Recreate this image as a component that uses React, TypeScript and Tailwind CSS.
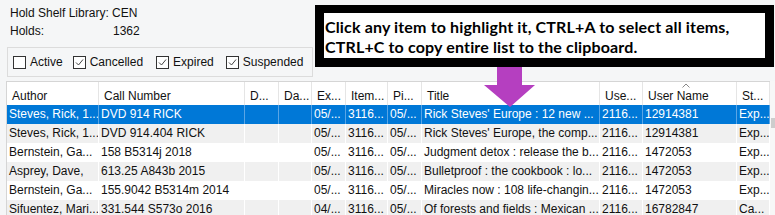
const columns = [
  { label: "Author", w: 92 },
  { label: "Call Number", w: 146 },
  { label: "D...", w: 34 },
  { label: "Da...", w: 33 },
  { label: "Ex...", w: 34 },
  { label: "Item...", w: 42 },
  { label: "Pi...", w: 34 },
  { label: "Title", w: 178 },
  { label: "Use...", w: 43 },
  { label: "User Name", w: 94 },
  { label: "St...", w: 33 },
];

const rows = [
  ["Steves, Rick, 1...", "DVD 914 RICK", "", "", "05/...", "3116...", "05/...", "Rick Steves' Europe : 12 new ...", "2116...", "12914381", "Exp..."],
  ["Steves, Rick, 1...", "DVD 914.404 RICK", "", "", "05/...", "3116...", "05/...", "Rick Steves' Europe, the comp...", "2116...", "12914381", "Exp..."],
  ["Bernstein, Ga...", "158 B5314j 2018", "", "", "05/...", "3116...", "05/...", "Judgment detox : release the b...", "2116...", "1472053", "Exp..."],
  ["Asprey, Dave,", "613.25 A843b 2015", "", "", "05/...", "3116...", "05/...", "Bulletproof : the cookbook : lo...", "2116...", "1472053", "Exp..."],
  ["Bernstein, Ga...", "155.9042 B5314m 2014", "", "", "05/...", "3116...", "05/...", "Miracles now : 108 life-changin...", "2116...", "1472053", "Exp..."],
  ["Sifuentez, Mari...", "331.544 S573o 2016", "", "", "04/...", "3116...", "05/...", "Of forests and fields : Mexican ...", "2116...", "16782847", "Ca..."],
];

const filters = [
  { label: "Active", checked: false, space: "mr-[10px]" },
  { label: "Cancelled", checked: true, space: "mr-[13px]" },
  { label: "Expired", checked: true, space: "mr-[12px]" },
  { label: "Suspended", checked: true, space: "" },
];

const CheckBox = ({ checked }: { checked: boolean }) => (
  <span className="w-[13px] h-[13px] border border-[#333] bg-white flex items-center justify-center">
    {checked && (
      <svg width="11" height="11" viewBox="0 0 11 11">
        <path d="M2 5.5 L4.5 8 L9 2.5" fill="none" stroke="#444" strokeWidth="1" />
      </svg>
    )}
  </span>
);

const App = () => {
  return (
    <div
      className="relative w-[775px] h-[215px] overflow-hidden bg-[#f5f6f7] text-[12px] text-[#111]"
      style={{ fontFamily: '"Liberation Sans", Arial, sans-serif' }}
    >
      <div className="pl-[10px] pt-[4px] leading-[18px]">
        <div>Hold Shelf Library: CEN</div>
        <div className="flex">
          <span className="w-[103px]">Holds:</span>
          <span>1362</span>
        </div>
      </div>

      <div className="ml-[7px] mt-[7px] w-[306px] h-[30px] border border-[#dcdcdc] flex items-center pl-[5px]">
        {filters.map((f) => (
          <label key={f.label} className={`flex items-center gap-[4px] ${f.space}`}>
            <CheckBox checked={f.checked} />
            <span>{f.label}</span>
          </label>
        ))}
      </div>

      <div className="mt-[4px] ml-[6px] flex">
        <div className="border-l border-t border-[#d5d5d5] bg-white">
          <div className="flex h-[23px] bg-white">
            {columns.map((c) => (
              <div
                key={c.label}
                style={{ width: c.w }}
                className="relative shrink-0 border-r border-[#e5e5e5] pl-[5px] pt-[5px] whitespace-nowrap overflow-hidden"
              >
                {c.label === "User Name" && (
                  <svg
                    className="absolute left-[39px] top-[1px]"
                    width="8"
                    height="5"
                    viewBox="0 0 8 5"
                  >
                    <path d="M0.5 4.5 L4 1 L7.5 4.5" fill="none" stroke="#888" strokeWidth="1" />
                  </svg>
                )}
                {c.label}
              </div>
            ))}
          </div>
          {rows.map((r, i) => {
            const selected = i === 0;
            const bg = selected ? "bg-[#0078d7] text-white" : i % 2 === 1 ? "bg-[#f0f0f0]" : "bg-white";
            return (
              <div key={i} className={`flex h-[19px] items-center ${bg}`}>
                {r.map((cell, j) => (
                  <div
                    key={j}
                    style={{ width: columns[j].w }}
                    className={`shrink-0 h-full leading-[19px] border-r ${selected ? "border-[#5aa5e5]" : "border-white"} px-[2px] whitespace-nowrap overflow-hidden`}
                  >
                    {cell}
                  </div>
                ))}
              </div>
            );
          })}
        </div>
        <div className="w-[5px] bg-[#f7f7f7] flex flex-col">
          <div className="h-[37px]" />
          <div className="h-[10px] w-[4px] ml-[1px] bg-[#cdcdcd]" />
        </div>
      </div>

      <div className="absolute left-[315px] top-[5px] w-[459px] h-[62px] border-black border-l-[9px] border-r-[9px] border-t-[8px] border-b-[9px] bg-white">
        <div
          className="pl-[1px] pt-[4px] text-black font-bold text-[16px] leading-[20px] tracking-[0.15px] whitespace-nowrap"
          style={{ fontFamily: 'Lato, "Noto Sans", sans-serif' }}
        >
          <div>Click any item to highlight it, CTRL+A to select all items,</div>
          <div>CTRL+C to copy entire list to the clipboard.</div>
        </div>
      </div>

      <svg className="absolute left-[483px] top-[67px]" width="53" height="41" viewBox="0 0 53 41">
        <path d="M14 0 H39 V18 H52 L27 40 L1 18 H14 Z" fill="#b53fc0" />
      </svg>
    </div>
  );
};

export default App;
